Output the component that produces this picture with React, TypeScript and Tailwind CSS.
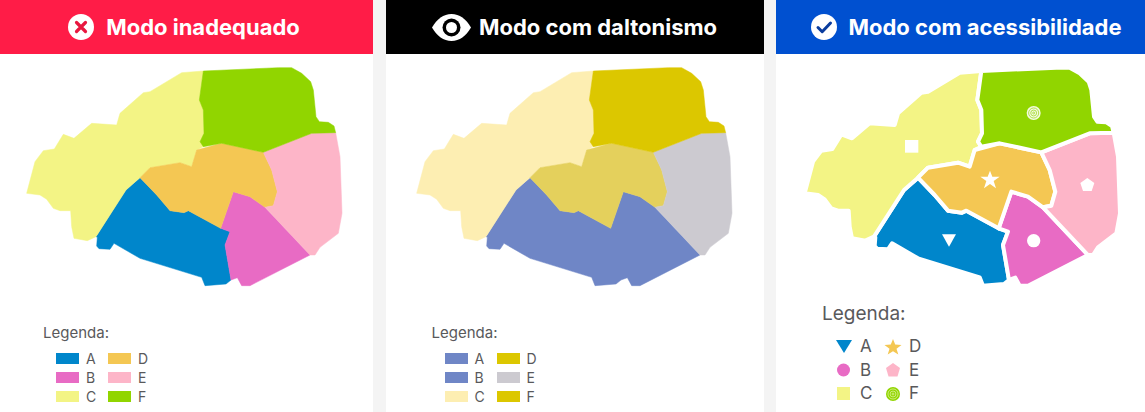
import React from "react";

const SHAPES: Record<string, string> = {
  a: "420,533 470,585 510,632 552,638 565,632 662,685 690,695 675,735 693,840 678,852 615,857 605,832 420,775 342,730 330,748 297,746 290,738 292,712 288,710 378,570",
  b: "700,575 750,590 795,622 930,765 750,857 725,857 712,833 693,840 675,735 690,695 662,685",
  c: "610,213 545,218 450,275 430,278 360,340 350,375 275,370 222,415 190,403 163,447 130,452 105,485 80,580 120,585 140,598 160,625 180,632 212,632 215,680 222,715 262,722 288,710 378,570 420,533 450,503 540,488 575,500 590,450 610,440 600,425 612,400 610,330 598,300",
  d: "420,533 450,503 540,488 575,500 590,450 665,430 790,457 815,510 832,575 820,617 795,622 750,590 700,575 662,685 565,632 552,638 510,632 470,585",
  e: "790,457 935,400 1007,398 1020,470 1026,640 1015,700 960,742 945,765 930,765 795,622 820,617 832,575 815,510",
  f: "610,213 835,203 875,203 905,220 932,245 940,270 948,350 958,365 985,367 1002,378 1007,398 935,400 790,457 665,430 610,440 600,425 612,400 610,330 598,300",
};

// A and B share one colour in the colour-blind view, so they are a single area there
const MERGED_SHAPES: Record<string, string> = {
  a: "420,533 470,585 510,632 552,638 565,632 662,685 700,575 750,590 795,622 930,765 750,857 725,857 712,833 693,840 678,852 615,857 605,832 420,775 342,730 330,748 297,746 290,738 292,712 288,710 378,570",
  c: SHAPES.c,
  d: SHAPES.d,
  e: SHAPES.e,
  f: SHAPES.f,
};

const COLORS = { a: "#0086cb", b: "#e86bc4", c: "#f3f485", d: "#f4c753", e: "#fdb5c8", f: "#91d500" };
const DALTONIC = { a: "#6f86c6", b: "#6f86c6", c: "#fdeeb2", d: "#e4d05c", e: "#cccad0", f: "#dcc700" };
const DALTONIC_LEGEND = { ...DALTONIC, d: "#dcc700" };

const Spiral = ({ cx, cy, r, bg, line }: { cx: number; cy: number; r: number; bg: string; line: string }) => (
  <g fill="none" stroke={line} strokeWidth={r * 0.13}>
    <circle cx={cx} cy={cy} r={r} fill={bg} stroke="none" />
    <circle cx={cx} cy={cy} r={r * 0.72} />
    <circle cx={cx} cy={cy} r={r * 0.42} />
    <circle cx={cx} cy={cy} r={r * 0.14} />
  </g>
);

const MapShapes = ({
  colors,
  gap,
  shapes = SHAPES,
}: {
  colors: Record<string, string>;
  gap?: boolean;
  shapes?: Record<string, string>;
}) => (
  <svg viewBox="0 162 1140 750" className="block w-[380px] h-[250px] shrink-0">
    {Object.entries(shapes).map(([key, points]) => (
      <polygon
        key={key}
        points={points}
        fill={colors[key]}
        stroke={gap ? "#ffffff" : colors[key]}
        strokeWidth={gap ? 12 : 1.5}
        strokeLinejoin="round"
      />
    ))}
    {gap && (
      <g fill="#ffffff">
        <rect x="381" y="420" width="40" height="38" />
        <polygon points="636,512 643,530 665,530 647,543 654,565 636,552 618,565 625,543 607,530 629,530" />
        <polygon points="928,534 949,549 941,573 915,573 907,549" />
        <polygon points="492,703 534,703 513,740" />
        <circle cx="767" cy="722" r="20" />
        <Spiral cx={767} cy={339} r={21} bg="#f4fbe0" line="#a9dc3a" />
      </g>
    )}
  </svg>
);

const Swatch = ({ label, color }: { label: string; color: string }) => (
  <div className="flex items-center gap-[7px] text-[14px] leading-[19px] text-[#59595b]">
    <span className="w-[23px] h-[11px]" style={{ backgroundColor: color }} />
    <span className="w-[15px]">{label}</span>
  </div>
);

const Legend = ({ colors, className }: { colors: Record<string, string>; className: string }) => (
  <div className={className}>
    <p className="text-[15px] leading-[20px] text-[#59595b]">Legenda:</p>
    <div className="grid grid-cols-[52px_52px] mt-[6px] ml-[13px]">
      {["a", "d", "b", "e", "c", "f"].map((key) => (
        <Swatch key={key} label={key.toUpperCase()} color={colors[key]} />
      ))}
    </div>
  </div>
);

const SymbolLegend = () => {
  const items = [
    { label: "A", icon: <polygon points="0,0 16,0 8,13" fill={COLORS.a} /> },
    {
      label: "D",
      icon: <polygon points="8,-1 10.2,4.6 16.5,5 11.5,8.8 13.3,14.5 8,11.3 2.7,14.5 4.5,8.8 -0.5,5 5.8,4.6" fill={COLORS.d} />,
    },
    { label: "B", icon: <circle cx="7.5" cy="7" r="6.5" fill={COLORS.b} /> },
    { label: "E", icon: <polygon points="8,0 15,5 12.5,13.5 3.5,13.5 1,5" fill={COLORS.e} /> },
    { label: "C", icon: <rect x="1" y="0" width="13" height="13" fill={COLORS.c} /> },
    { label: "F", icon: <Spiral cx={8} cy={7} r={7} bg={COLORS.f} line="#d4f08a" /> },
  ];
  return (
    <div className="ml-[46px] mt-[-2px]">
      <p className="text-[19px] leading-[24px] text-[#59595b]">Legenda:</p>
      <div className="grid grid-cols-[49px_49px] mt-[9px] ml-[14px]">
        {items.map((item) => (
          <div key={item.label} className="flex items-center gap-[8px] h-[23.5px] text-[17px] text-[#59595b]">
            <svg viewBox="0 0 16 14" className="w-[16px] h-[14px] overflow-visible">
              {item.icon}
            </svg>
            <span>{item.label}</span>
          </div>
        ))}
      </div>
    </div>
  );
};

const Panel = ({
  title,
  icon,
  bg,
  className,
  headerClass,
  children,
}: {
  title: string;
  icon: React.ReactNode;
  bg: string;
  className: string;
  headerClass: string;
  children: React.ReactNode;
}) => (
  <section className={`bg-white h-[412px] overflow-hidden ${className}`}>
    <header className={`h-[54px] flex items-center justify-center ${bg} ${headerClass}`}>
      {icon}
      <h2 className="text-[22px] font-bold text-white whitespace-nowrap">{title}</h2>
    </header>
    {children}
  </section>
);

export default function App() {
  return (
    <div
      className="w-[1145px] h-[412px] overflow-hidden bg-[#f4f4f4] flex justify-between"
      style={{ fontFamily: "Inter, sans-serif" }}
    >
      <Panel
        title="Modo inadequado"
        bg="bg-[#ff1c47]"
        className="w-[373px]"
        headerClass="gap-[12px] pr-[5px]"
        icon={
          <svg viewBox="0 0 26 26" className="w-[26px] h-[26px]">
            <circle cx="13" cy="13" r="13" fill="#ffffff" />
            <path d="M8.5 8.5l9 9M17.5 8.5l-9 9" stroke="#e8173f" strokeWidth="3.2" strokeLinecap="round" />
          </svg>
        }
      >
        <MapShapes colors={COLORS} />
        <Legend colors={COLORS} className="ml-[43px] mt-[19px]" />
      </Panel>
      <Panel
        title="Modo com daltonismo"
        bg="bg-black"
        className="w-[378px]"
        headerClass="gap-[8px]"
        icon={
          <svg viewBox="0 0 39 27" className="w-[39px] h-[27px]">
            <path d="M0 13.5C5 5 11.5 0 19.5 0S34 5 39 13.5C34 22 27.5 27 19.5 27S5 22 0 13.5Z" fill="#ffffff" />
            <circle cx="19.5" cy="13.5" r="9" fill="#000000" />
            <circle cx="19.5" cy="13.5" r="5.5" fill="#ffffff" />
          </svg>
        }
      >
        <div className="ml-[4px]">
          <MapShapes colors={DALTONIC} shapes={MERGED_SHAPES} />
        </div>
        <Legend colors={DALTONIC_LEGEND} className="ml-[46px] mt-[19px]" />
      </Panel>
      <Panel
        title="Modo com acessibilidade"
        bg="bg-[#0050d0]"
        className="w-[369px]"
        headerClass="gap-[11px] pl-[12px]"
        icon={
          <svg viewBox="0 0 26 26" className="w-[26px] h-[26px] shrink-0">
            <circle cx="13" cy="13" r="13" fill="#ffffff" />
            <path d="M7 13.5l4.2 4.2L19.5 9" fill="none" stroke="#0a3c9e" strokeWidth="3" strokeLinecap="round" strokeLinejoin="round" />
          </svg>
        }
      >
        <div className="ml-[2px]">
          <MapShapes colors={COLORS} gap />
        </div>
        <SymbolLegend />
      </Panel>
    </div>
  );
}
